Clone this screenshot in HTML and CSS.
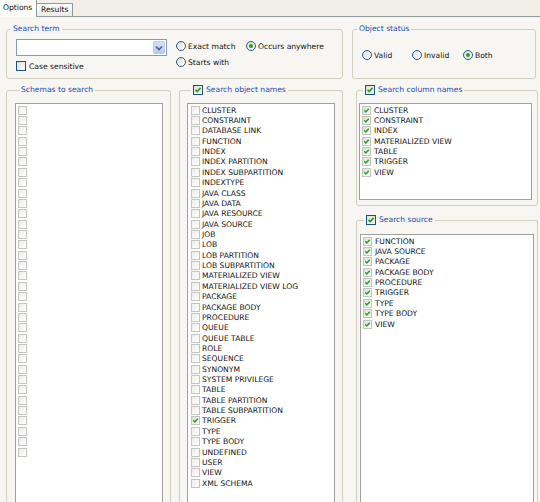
FILE: index.html
```html
<!DOCTYPE html>
<html lang="en">

<head>
  <meta charset="UTF-8">
  <title>Find Database Objects</title>
  <link rel="stylesheet" href="styles.css">
</head>

<body>
  <div class="tabs">
    <span class="tab active">Options</span>
    <span class="tab">Results</span>
  </div>

  <div class="page">
    <div class="top-row">
      <fieldset class="group search-term">
        <legend>Search term</legend>
        <div class="term-body">
          <div class="term-left">
            <div class="combo">
              <span class="combo-btn">
                <svg width="8" height="6" viewBox="0 0 8 6"><path d="M1 1.5 L4 4.5 L7 1.5" fill="none" stroke="#4d6185" stroke-width="1.6"/></svg>
              </span>
            </div>
            <label class="check"><span class="box"></span>Case sensitive</label>
          </div>
          <div class="radios">
            <label class="radio"><span class="dot"></span>Exact match</label>
            <label class="radio on"><span class="dot"></span>Occurs anywhere</label>
            <label class="radio"><span class="dot"></span>Starts with</label>
          </div>
        </div>
      </fieldset>

      <fieldset class="group status">
        <legend>Object status</legend>
        <div class="status-body">
          <label class="radio valid"><span class="dot"></span>Valid</label>
          <label class="radio invalid"><span class="dot"></span>Invalid</label>
          <label class="radio on"><span class="dot"></span>Both</label>
        </div>
      </fieldset>
    </div>

    <div class="bottom-row">
      <fieldset class="group schemas open">
        <legend>Schemas to search</legend>
        <div class="list" id="schemaList"></div>
      </fieldset>

      <fieldset class="group objects open">
        <legend><label class="check"><span class="box on"></span>Search object names</label></legend>
        <div class="list" id="objectList"></div>
      </fieldset>

      <div class="right-col">
        <fieldset class="group columns">
          <legend><label class="check"><span class="box on"></span>Search column names</label></legend>
          <div class="list" id="columnList"></div>
        </fieldset>

        <fieldset class="group source open">
          <legend><label class="check"><span class="box on"></span>Search source</label></legend>
          <div class="list" id="sourceList"></div>
        </fieldset>
      </div>
    </div>
  </div>

  <script>
    const objectTypes = ['CLUSTER', 'CONSTRAINT', 'DATABASE LINK', 'FUNCTION', 'INDEX', 'INDEX PARTITION',
      'INDEX SUBPARTITION', 'INDEXTYPE', 'JAVA CLASS', 'JAVA DATA', 'JAVA RESOURCE', 'JAVA SOURCE', 'JOB', 'LOB',
      'LOB PARTITION', 'LOB SUBPARTITION', 'MATERIALIZED VIEW', 'MATERIALIZED VIEW LOG', 'PACKAGE', 'PACKAGE BODY',
      'PROCEDURE', 'QUEUE', 'QUEUE TABLE', 'ROLE', 'SEQUENCE', 'SYNONYM', 'SYSTEM PRIVILEGE', 'TABLE',
      'TABLE PARTITION', 'TABLE SUBPARTITION', 'TRIGGER', 'TYPE', 'TYPE BODY', 'UNDEFINED', 'USER', 'VIEW',
      'XML SCHEMA'];
    const columnTypes = ['CLUSTER', 'CONSTRAINT', 'INDEX', 'MATERIALIZED VIEW', 'TABLE', 'TRIGGER', 'VIEW'];
    const sourceTypes = ['FUNCTION', 'JAVA SOURCE', 'PACKAGE', 'PACKAGE BODY', 'PROCEDURE', 'TRIGGER', 'TYPE',
      'TYPE BODY', 'VIEW'];

    function fillList(id, names, isChecked) {
      const list = document.getElementById(id);
      names.forEach(function (name) {
        const row = document.createElement('div');
        row.className = 'row';
        const box = document.createElement('span');
        box.className = isChecked(name) ? 'lbox on' : 'lbox';
        row.appendChild(box);
        row.appendChild(document.createTextNode(name));
        list.appendChild(row);
      });
    }

    fillList('schemaList', new Array(34).fill(''), function () { return false; });
    fillList('objectList', objectTypes, function (name) { return name === 'TRIGGER'; });
    fillList('columnList', columnTypes, function () { return true; });
    fillList('sourceList', sourceTypes, function () { return true; });
  </script>
</body>

</html>
```

FILE: styles.css
```css
html,
body {
  margin: 0;
  height: 100%;
  overflow: hidden;
}

body {
  display: flex;
  flex-direction: column;
  background-color: #f7f6f2;
  font-family: "DejaVu Sans", sans-serif;
  font-size: 7.6px;
  color: #111;
}

/* tab strip */
.tabs {
  display: flex;
  align-items: flex-end;
  height: 16px;
  flex-shrink: 0;
  background-color: #f1efe8;
  border-bottom: 1px solid #919b9c;
}

.tab {
  box-sizing: border-box;
  height: 13px;
  line-height: 12px;
  width: 36px;
  padding-left: 4px;
  border: 1px solid #919b9c;
  border-bottom: none;
  border-left: none;
  background: linear-gradient(#fefefe, #ebeae4);
}

.tab.active {
  height: 17px;
  width: 37px;
  line-height: 16px;
  padding-left: 3px;
  margin-bottom: -1px;
  border-top: none;
  background: #fcfcfb;
}

.page {
  flex: 1;
  min-height: 0;
  display: flex;
  flex-direction: column;
  padding: 7px 0 0 6px;
}

/* group boxes */
.group {
  margin: 0;
  padding: 0;
  min-width: 0;
  box-sizing: border-box;
  border: 1px solid #d0d0bf;
  border-radius: 3px;
}

.group.open {
  display: flex;
  flex-direction: column;
  min-height: 0;
  border-bottom: none;
  border-radius: 3px 3px 0 0;
}

.group legend {
  margin-left: 4px;
  padding: 0 2px;
  height: 10px;
  line-height: 10px;
  color: #1a4bb0;
}

.top-row {
  display: flex;
  gap: 9px;
  flex-shrink: 0;
}

.search-term {
  width: 337px;
}

.status {
  width: 184px;
}

.term-body {
  display: flex;
  padding: 5px 0 6px 9px;
}

.term-left {
  width: 151px;
}

.combo {
  box-sizing: border-box;
  height: 17px;
  display: flex;
  justify-content: flex-end;
  padding: 1px;
  background: #fff;
  border: 1px solid #7f9db9;
}

.combo-btn {
  box-sizing: border-box;
  width: 12px;
  display: flex;
  align-items: center;
  justify-content: center;
  border: 1px solid #bccbf2;
  border-radius: 2px;
  background: linear-gradient(#d3defc, #b7c9f6);
}

.check {
  display: flex;
  align-items: center;
  height: 12px;
}

.term-left .check {
  margin-top: 4px;
}

.box {
  box-sizing: border-box;
  width: 10px;
  height: 10px;
  margin-right: 3px;
  border: 1px solid #1c5180;
  background: linear-gradient(135deg, #dcdcd5, #fff);
}

.box.on,
.lbox.on {
  background-image: url("data:image/svg+xml,%3Csvg xmlns='http://www.w3.org/2000/svg' viewBox='0 0 8 8'%3E%3Cpath d='M1.5 3.8 L3.2 5.6 L6.6 1.9' fill='none' stroke='%2321a121' stroke-width='1.7'/%3E%3C/svg%3E"), linear-gradient(135deg, #dcdcd5, #fff);
  background-size: 100% 100%, auto;
}

.radios {
  display: grid;
  grid-template-columns: 70px auto;
  grid-auto-rows: 16px;
  margin: -1px 0 0 9px;
}

.radio {
  display: flex;
  align-items: center;
}

.dot {
  box-sizing: border-box;
  width: 10px;
  height: 10px;
  margin-right: 2px;
  border-radius: 50%;
  border: 1px solid #2c5a85;
  background: linear-gradient(135deg, #dcdcd5, #fff);
  display: flex;
  align-items: center;
  justify-content: center;
}

.radio.on .dot::after {
  content: "";
  width: 4px;
  height: 4px;
  border-radius: 50%;
  background: #21a121;
}

.status-body {
  display: flex;
  height: 12px;
  padding: 15px 0 0 9px;
}

.status-body .valid {
  width: 50px;
}

.status-body .invalid {
  width: 51px;
}

/* lower lists */
.bottom-row {
  flex: 1;
  min-height: 0;
  display: flex;
  margin-top: 5px;
}

.bottom-row .group legend {
  height: 12px;
  line-height: 12px;
}

.bottom-row .check {
  height: 12px;
}

.schemas {
  width: 165px;
  padding: 7px 0 0 8px;
}

.objects {
  width: 164px;
  margin-left: 8px;
  padding: 7px 0 0 7px;
}

.right-col {
  width: 182px;
  margin-left: 13px;
  display: flex;
  flex-direction: column;
}

.columns {
  padding: 7px 0 5px 2px;
}

.source {
  flex: 1;
  margin-top: 8px;
  padding: 8px 0 0 3px;
}

.list {
  box-sizing: border-box;
  width: 148px;
  padding: 1px 0 0 2px;
  background: #fff;
  border: 1px solid #a0a0a0;
}

.open .list {
  flex: 1;
  min-height: 0;
  overflow: hidden;
  border-bottom: none;
}

.objects .list {
  padding-left: 3px;
}

.columns .list {
  width: 173px;
  height: 97px;
}

.source .list {
  width: 174px;
}

.row {
  display: flex;
  align-items: center;
  height: 10.36px;
  white-space: nowrap;
}

.lbox {
  box-sizing: border-box;
  width: 9px;
  height: 9px;
  margin-right: 2px;
  border: 1px solid #c4c4c0;
  background: linear-gradient(135deg, #ececea, #fff);
}

.columns .lbox,
.source .lbox {
  margin-right: 3px;
}
```
